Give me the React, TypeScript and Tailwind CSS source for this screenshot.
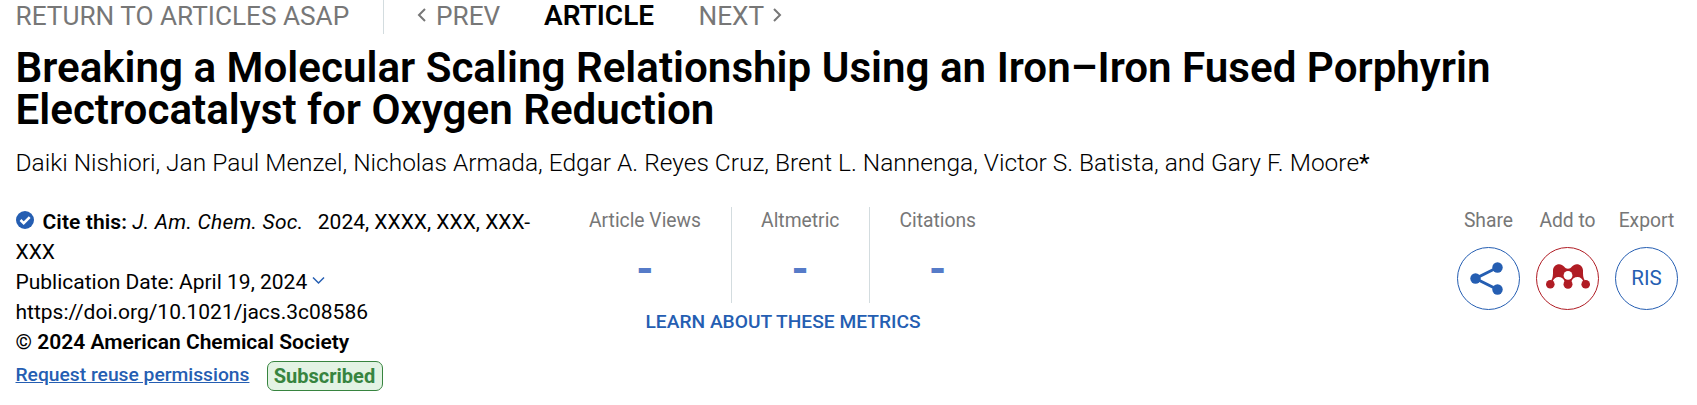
type MetricProps = {
  label: string;
  className?: string;
};

const Metric: React.FC<MetricProps> = ({ label, className = '' }) => (
  <div className={`h-24 flex flex-col items-center ${className}`}>
    <p className="pt-px text-[19.3px] leading-[26px] text-[#777]">{label}</p>
    <span className="mt-[11px] text-[44px] leading-[48px] font-bold text-[#567bc8]">-</span>
  </div>
);

type ActionProps = {
  label: string;
  className: string;
  children: React.ReactNode;
};

const Action: React.FC<ActionProps> = ({ label, className, children }) => (
  <div className="w-[63px] flex flex-col items-center">
    <p className="pt-px text-[19.3px] leading-[26px] text-[#777] whitespace-nowrap">{label}</p>
    <button
      className={`mt-[13px] w-[63px] h-[63px] rounded-full border flex items-center justify-center ${className}`}
    >
      {children}
    </button>
  </div>
);

const ShareIcon = () => (
  <svg className="mr-[4px] mb-px" width="33" height="33" viewBox="0 0 33 33" fill="currentColor">
    <path d="M27.500 5.500 5.500 16.500l22 11" fill="none" stroke="currentColor" strokeWidth="3" />
    <circle cx="27.500" cy="5.500" r="5.200" />
    <circle cx="5.500" cy="16.500" r="5.200" />
    <circle cx="27.500" cy="27.500" r="5.200" />
  </svg>
);

const MendeleyIcon = () => (
  <svg className="mb-[5px]" width="44" height="25" viewBox="0 0 44 25" fill="currentColor">
    <path d="M7 6.500C7 2.800 9.800.2 13.200.2c2 0 3.600.9 4.800 2.400 1.200 1.600 2.400 2.100 4 2.100s2.800-.5 4-2.100C27.200 1.100 28.800.2 30.800.2 34.200.2 37 2.800 37 6.500c0 4-.1 7 1.800 10l-1.500.8c-1.200-2.700-3-4.300-5.600-4.300-3.400 0-5.500 1.500-6.500 5h-6.400c-1-3.500-3.100-5-6.500-5-2.600 0-4.400 1.600-5.600 4.300l-1.500-.8C7.100 13.500 7 10.500 7 6.500z" />
    <circle cx="4.300" cy="20.300" r="4.300" />
    <circle cx="22" cy="20.300" r="4.500" />
    <circle cx="39.700" cy="20.300" r="4.300" />
    <circle cx="22" cy="11.400" r="4.400" fill="#fff" />
  </svg>
);

export default function App() {
  return (
    <div className="h-[405px] overflow-hidden bg-white pl-[15.5px] pr-[19px] font-[Roboto,sans-serif] text-black">
      <nav className="flex h-[34px] text-[26.2px] leading-[32px] text-[#777] whitespace-nowrap">
        <a className="w-[368.5px] border-r border-[#d3dcdf]">RETURN TO ARTICLES ASAP</a>
        <a className="ml-[33px] w-[127px] flex">
          <svg className="mt-2 mr-[9px]" width="10" height="14" viewBox="0 0 10 14" fill="none" stroke="currentColor" strokeWidth="2">
            <path d="M8 1 2 7l6 6" />
          </svg>
          PREV
        </a>
        <span className="w-[154.5px] text-[28px] leading-[31px] font-semibold text-black">ARTICLE</span>
        <a className="flex">
          NEXT
          <svg className="mt-2 ml-[8px]" width="10" height="14" viewBox="0 0 10 14" fill="none" stroke="currentColor" strokeWidth="2">
            <path d="m2 1 6 6-6 6" />
          </svg>
        </a>
      </nav>

      <h1 className="mt-[13px] text-[42.15px] leading-[42px] font-semibold whitespace-nowrap">
        Breaking a Molecular Scaling Relationship Using an Iron–Iron Fused Porphyrin
        <br />
        Electrocatalyst for Oxygen Reduction
      </h1>
      <p className="mt-[17px] text-[24.5px] leading-[30px] font-light whitespace-nowrap">
        Daiki Nishiori, Jan Paul Menzel, Nicholas Armada, Edgar A. Reyes Cruz, Brent L. Nannenga, Victor S. Batista, and Gary F. Moore<span className="font-normal">*</span>
      </p>

      <div className="mt-[29px] flex items-start">
        <div className="w-[542.5px] text-[21px] leading-[30px] whitespace-nowrap">
          <div className="flex">
            <svg className="mt-1 mr-[9px]" width="18" height="18" viewBox="0 0 18 18">
              <circle cx="9" cy="9" r="9" fill="#255eb2" />
              <path d="m4.500 9 3.200 3.200 6-6" fill="none" stroke="#fff" strokeWidth="2.600" />
            </svg>
            <p>
              <span className="font-semibold tracking-[0.1px]">Cite this:</span>{' '}
              <i className="mr-[4px] tracking-[0.25px]">J. Am. Chem. Soc.</i>&nbsp; 2024, XXXX, XXX, XXX-
            </p>
          </div>
          <p>XXX</p>
          <p className="flex">
            Publication Date: April 19, 2024
            <svg className="mt-[9px] ml-[5px]" width="13" height="9" viewBox="0 0 13 9" fill="none" stroke="#255eb2" strokeWidth="1.500">
              <path d="m1 1.500 5.500 5.500L12 1.500" />
            </svg>
          </p>
          <p>https://doi.org/10.1021/jacs.3c08586</p>
          <p className="font-semibold">© 2024 American Chemical Society</p>
          <div className="mt-[4px] flex">
            <a className="w-[251px] text-[19.25px] leading-[28px] font-medium text-[#255eb2] underline">
              Request reuse permissions
            </a>
            <span className="w-[116px] h-[30px] rounded-[7px] border-[1.5px] border-[#37843f] bg-[#e3f3e4] text-center text-[20px] leading-[29px] font-bold text-[#37843f]">
              Subscribed
            </span>
          </div>
        </div>

        <div className="w-[448px] whitespace-nowrap">
          <div className="flex">
            <Metric label="Article Views" className="w-[173px] pl-[31px] pr-[30px]" />
            <Metric label="Altmetric" className="w-[138px] border-l border-[#d3dcdf]" />
            <Metric label="Citations" className="w-[138px] border-l border-[#d3dcdf]" />
          </div>
          <a className="block mt-[5px] pl-[87.5px] text-[19.2px] leading-[27px] font-medium text-[#255eb2]">
            LEARN ABOUT THESE METRICS
          </a>
        </div>

        <div className="ml-auto flex gap-4">
          <Action label="Share" className="border-[#255eb2] text-[#255eb2]">
            <ShareIcon />
          </Action>
          <Action label="Add to" className="border-[#b01c24] text-[#b01c24]">
            <MendeleyIcon />
          </Action>
          <Action label="Export" className="border-[#255eb2] text-[#255eb2]">
            <span className="text-[20.5px]">RIS</span>
          </Action>
        </div>
      </div>
    </div>
  );
}
